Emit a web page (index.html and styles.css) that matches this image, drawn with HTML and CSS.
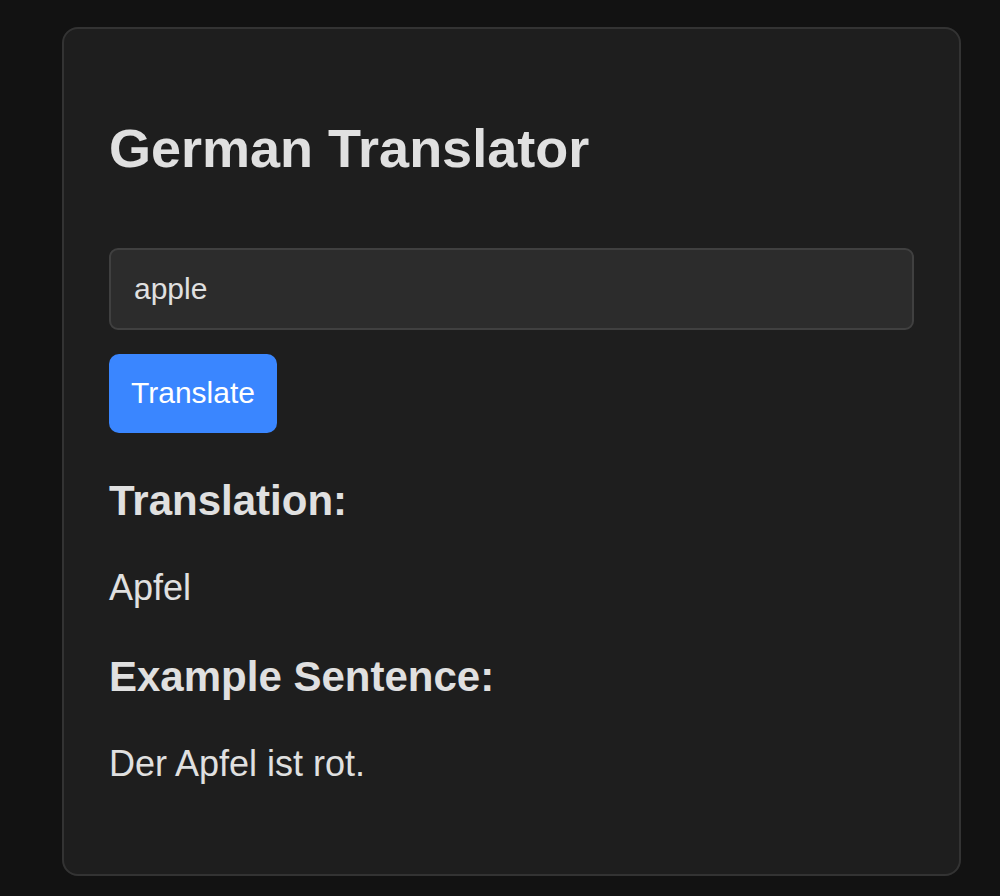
FILE: index.html
```html
<!DOCTYPE html>
<html lang="en">
<head>
<meta charset="utf-8">
<title>German Translator</title>
<link rel="stylesheet" href="styles.css">
</head>
<body>
<div class="page">
  <main class="card">
    <h2 class="title">German Translator</h2>
    <input class="word-input" type="text" value="apple">
    <button class="translate-btn" type="button">Translate</button>
    <section class="result">
      <h3 class="result-heading">Translation:</h3>
      <p class="result-text">Apfel</p>
      <h3 class="result-heading">Example Sentence:</h3>
      <p class="result-text last">Der Apfel ist rot.</p>
    </section>
  </main>
</div>
</body>
</html>
```

FILE: styles.css
```css
* { box-sizing: border-box; }

html, body {
  margin: 0;
  padding: 0;
  background: #121212;
}

body {
  font-family: "Liberation Sans", Arial, sans-serif;
  color: #e0e0e0;
  font-size: 36px;
}

.page {
  padding: 27px 0 0 62px;
  min-height: 896px;
}

.card {
  width: 899px;
  background: #1e1e1e;
  border: 2px solid #333333;
  border-radius: 16px;
  padding: 45px;
  display: flex;
  flex-direction: column;
  align-items: flex-start;
}

.title {
  font-size: 54px;
  font-weight: bold;
  line-height: normal;
  margin: 43.3px 0 68.7px;
  color: #e0e0e0;
}

.word-input {
  display: block;
  width: 100%;
  height: 82px;
  margin: 0;
  padding: 0 23px;
  font-family: "Liberation Sans", Arial, sans-serif;
  font-size: 30px;
  color: #e0e0e0;
  background: #2c2c2c;
  border: 2px solid #404040;
  border-radius: 9px;
  outline: none;
}

.translate-btn {
  margin: 24px 0 0;
  padding: 0 22px;
  height: 79px;
  font-family: "Liberation Sans", Arial, sans-serif;
  font-size: 30px;
  color: #ffffff;
  background: #3a86ff;
  border: none;
  border-radius: 10px;
}

.result {
  width: 100%;
}

.result-heading {
  font-size: 42px;
  font-weight: bold;
  line-height: normal;
  margin: 44.5px 0 41.5px;
  color: #e0e0e0;
}

.result-text {
  font-size: 36px;
  line-height: normal;
  margin: 0;
  color: #e0e0e0;
}

.result-text.last {
  margin-bottom: 44px;
}
```
